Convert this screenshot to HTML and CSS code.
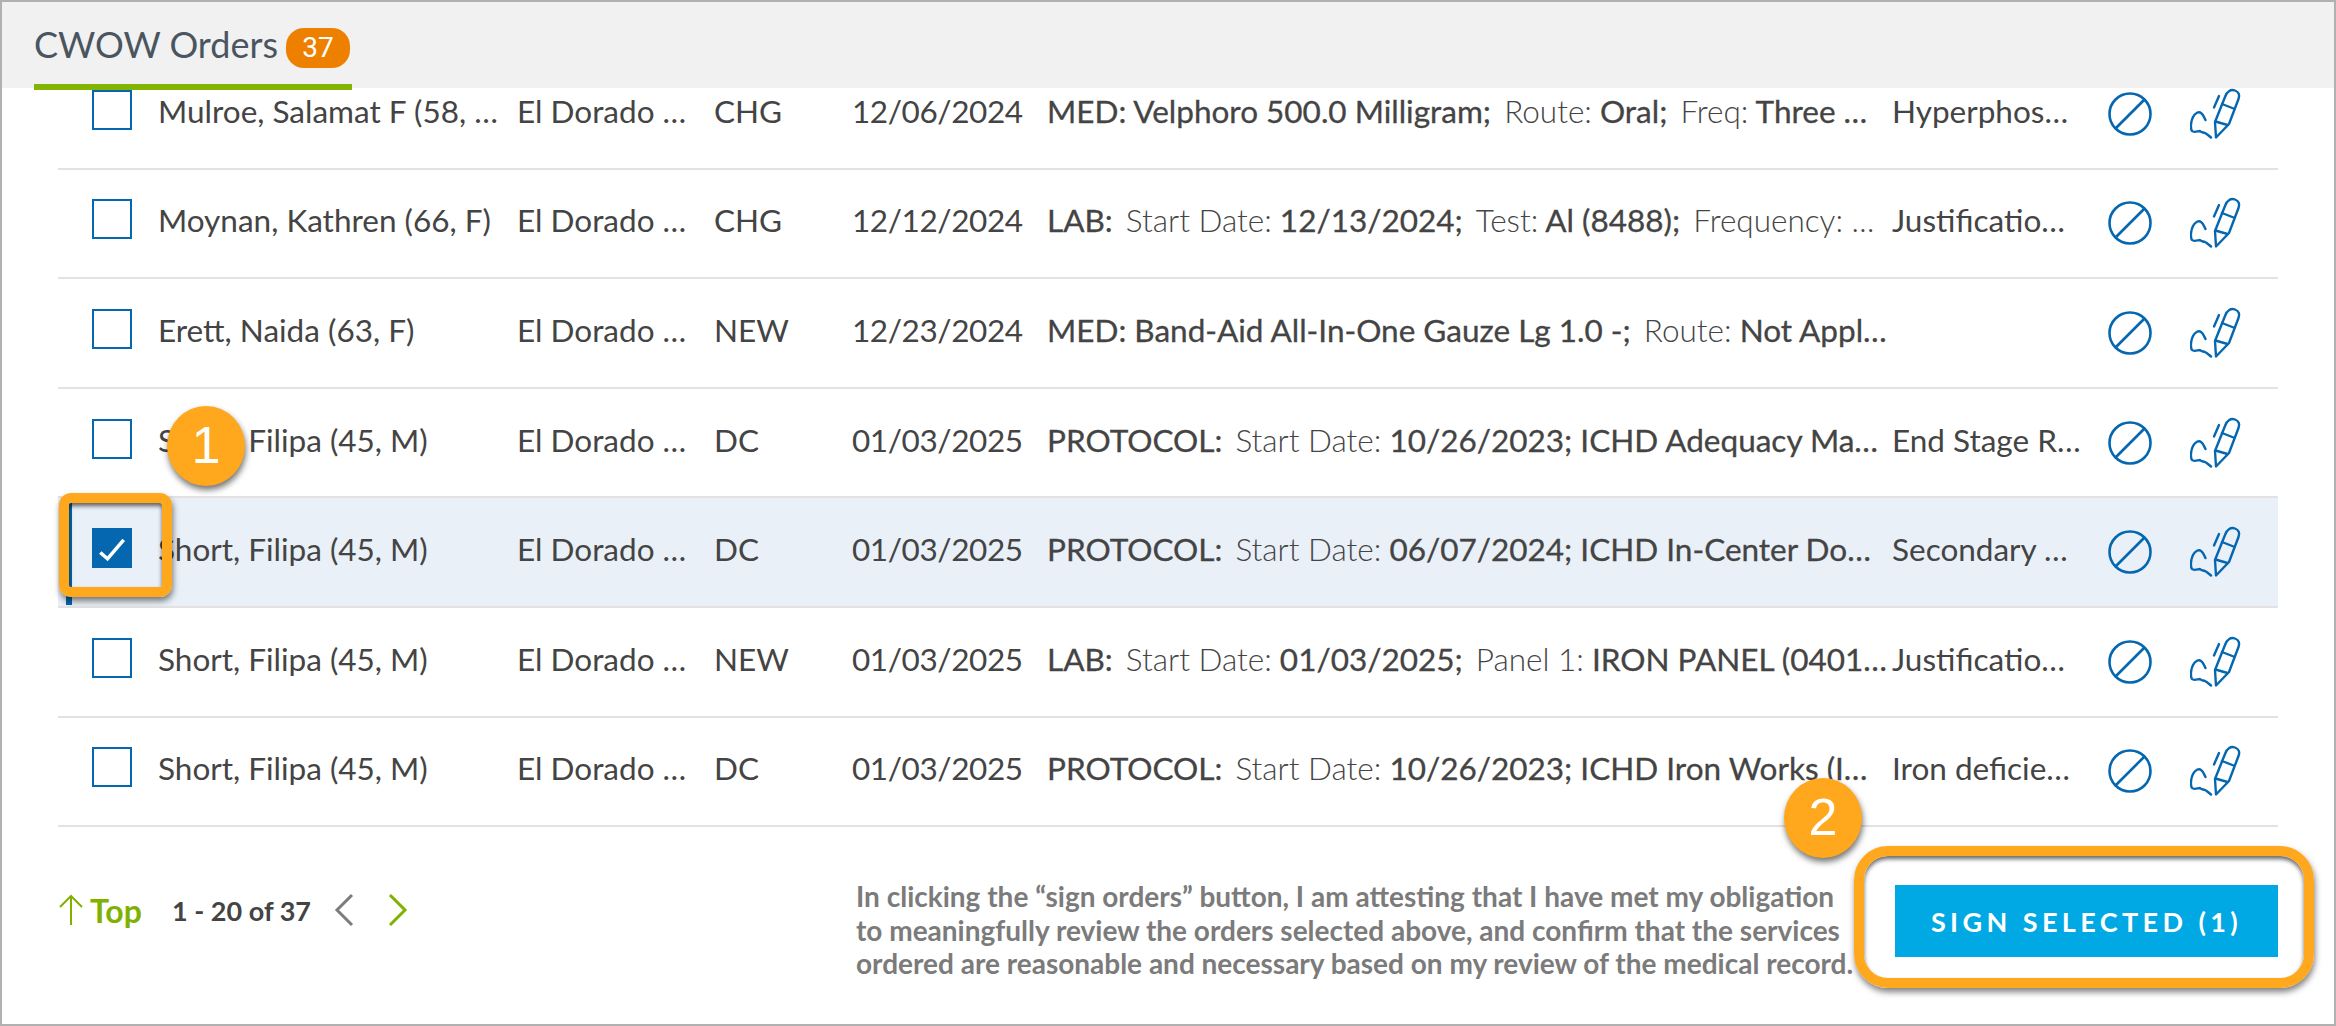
FILE: index.html
```html
<!DOCTYPE html>
<html lang="en">
<head>
<meta charset="utf-8">
<title>CWOW Orders</title>
<link rel="stylesheet" href="styles.css">
</head>
<body>
<svg class="defs" width="0" height="0" aria-hidden="true">
  <symbol id="i-block" viewBox="0 0 44 44"><circle cx="22" cy="22" r="20.5" fill="none" stroke="currentColor" stroke-width="2.6"/><path d="M7.5 36.5 36.5 7.5" fill="none" stroke="currentColor" stroke-width="2.6"/></symbol>
  <symbol id="i-sign" viewBox="0 0 52 52"><g fill="none" stroke="currentColor" stroke-width="2.4" stroke-linecap="round" stroke-linejoin="round"><path d="M26 49.500 25 34 35 9C37 3 41 1 45 2.500 49 4 50 7 48.500 11L39 36Z"/><path d="M32 16 43.500 20.500M25.500 33.500 37.500 37"/><path d="M24 19.500 29 8"/><path d="M21 49.500C18 47 17 46 15 45 13 44 12 45 10 43 8 43 4 45 2 43 0 40 1 33 3 29 5 25 9 23 11 25 14 27 14 30 15.500 32"/></g></symbol>
</svg>
<main class="panel">
  <header class="tabs">
    <div class="tab"><span class="tab-label">CWOW Orders</span><span class="badge">37</span></div>
  </header>
  <section class="list">
    <div class="rows">
      <div class="row"><span class="check"></span><span>Mulroe, Salamat F (58, …</span><span>El Dorado …</span><span>CHG</span><span class="date">12/06/2024</span><span class="detail"><b>MED: Velphoro 500.0 Milligram;</b> <i>Route:</i> <b>Oral;</b> <i>Freq:</i> <b>Three …</b></span><span>Hyperphos…</span><span class="icons"><svg class="ic-block"><use href="#i-block"/></svg><svg class="ic-sign"><use href="#i-sign"/></svg></span></div>
      <div class="row"><span class="check"></span><span>Moynan, Kathren (66, F)</span><span>El Dorado …</span><span>CHG</span><span class="date">12/12/2024</span><span class="detail"><b>LAB:</b> <i>Start Date:</i> <b>12/13/2024;</b> <i>Test:</i> <b>Al (8488);</b> <i>Frequency: …</i></span><span>Justificatio…</span><span class="icons"><svg class="ic-block"><use href="#i-block"/></svg><svg class="ic-sign"><use href="#i-sign"/></svg></span></div>
      <div class="row"><span class="check"></span><span>Erett, Naida (63, F)</span><span>El Dorado …</span><span>NEW</span><span class="date">12/23/2024</span><span class="detail"><b>MED: Band-Aid All-In-One Gauze Lg 1.0 -;</b> <i>Route:</i> <b>Not Appl…</b></span><span></span><span class="icons"><svg class="ic-block"><use href="#i-block"/></svg><svg class="ic-sign"><use href="#i-sign"/></svg></span></div>
      <div class="row"><span class="check"></span><span>Short, Filipa (45, M)</span><span>El Dorado …</span><span>DC</span><span class="date">01/03/2025</span><span class="detail"><b>PROTOCOL:</b> <i>Start Date:</i> <b>10/26/2023; ICHD Adequacy Ma…</b></span><span>End Stage R…</span><span class="icons"><svg class="ic-block"><use href="#i-block"/></svg><svg class="ic-sign"><use href="#i-sign"/></svg></span></div>
      <div class="row selected"><span class="check checked"><svg viewBox="0 0 40 40"><path d="M7 25 15 32 33 11" fill="none" stroke="#fff" stroke-width="4"/></svg></span><span>Short, Filipa (45, M)</span><span>El Dorado …</span><span>DC</span><span class="date">01/03/2025</span><span class="detail"><b>PROTOCOL:</b> <i>Start Date:</i> <b>06/07/2024; ICHD In-Center Do…</b></span><span>Secondary …</span><span class="icons"><svg class="ic-block"><use href="#i-block"/></svg><svg class="ic-sign"><use href="#i-sign"/></svg></span></div>
      <div class="row"><span class="check"></span><span>Short, Filipa (45, M)</span><span>El Dorado …</span><span>NEW</span><span class="date">01/03/2025</span><span class="detail"><b>LAB:</b> <i>Start Date:</i> <b>01/03/2025;</b> <i>Panel 1:</i> <b>IRON PANEL (0401…</b></span><span>Justificatio…</span><span class="icons"><svg class="ic-block"><use href="#i-block"/></svg><svg class="ic-sign"><use href="#i-sign"/></svg></span></div>
      <div class="row"><span class="check"></span><span>Short, Filipa (45, M)</span><span>El Dorado …</span><span>DC</span><span class="date">01/03/2025</span><span class="detail"><b>PROTOCOL:</b> <i>Start Date:</i> <b>10/26/2023; ICHD Iron Works (I…</b></span><span>Iron deficie…</span><span class="icons"><svg class="ic-block"><use href="#i-block"/></svg><svg class="ic-sign"><use href="#i-sign"/></svg></span></div>
    </div>
  </section>
  <footer class="foot">
    <div class="pager">
      <a class="top"><svg viewBox="0 0 26 32"><path d="M13 31V2M2 13 13 2 24 13" fill="none" stroke="currentColor" stroke-width="2"/></svg>Top</a>
      <span class="count">1 - 20 of 37</span>
      <svg class="chev prev" viewBox="0 0 20 34"><path d="M18 2 3 17 18 32" fill="none" stroke="currentColor" stroke-width="3"/></svg>
      <svg class="chev next" viewBox="0 0 20 34"><path d="M2 2 17 17 2 32" fill="none" stroke="currentColor" stroke-width="3"/></svg>
    </div>
    <p class="attest">In clicking the “sign orders” button, I am attesting that I have met my obligation<br>to meaningfully review the orders selected above, and confirm that the services<br>ordered are reasonable and necessary based on my review of the medical record.</p>
    <button class="sign">SIGN SELECTED (1)</button>
  </footer>
  <div class="dot dot-1">1</div>
  <div class="dot dot-2">2</div>
  <div class="callout callout-1"></div>
  <div class="callout callout-2"></div>
</main>
</body>
</html>
```
FILE: styles.css
```css
* { box-sizing: border-box; }
html, body { margin: 0; height: 100%; }
body { font-family: Lato, "Open Sans", sans-serif; color: #444; background: #fff; overflow: hidden; }
.defs { position: absolute; }
.panel { position: relative; width: 2336px; height: 1026px; border: 2px solid #b1b1b1; display: flex; flex-direction: column; background: #fff; }
.tabs { height: 86px; background: #f1f1f1; padding-left: 32px; flex: none; position: relative; z-index: 1; }
.tab { display: inline-flex; align-items: flex-start; gap: 8px; width: 318px; height: 88px; border-bottom: 6px solid #84b402; padding-top: 20px; white-space: nowrap; }
.tab-label { font-size: 36px; line-height: 44px; color: #4a5560; }
.badge { width: 64px; height: 40px; border-radius: 18px; margin-top: 6px; background: #ee8000; color: #fff; font: 28px/40px Roboto, sans-serif; text-align: center; }
.list { height: 740px; overflow: hidden; padding: 0 56px; flex: none; }
.rows { margin-top: -28px; }
.row { position: relative; height: 109.6px; display: grid; grid-template-columns: 100px 359px 197px 138px 195px 845px 216px 1fr; align-items: center; border-bottom: 2px solid #e2e2e2; font-size: 31.500px; line-height: 40px; white-space: nowrap; }
.row > span { overflow: hidden; padding-bottom: 6px; }
.row > .icons, .row > .check { padding-bottom: 0; }
.date { letter-spacing: -.4px; }
.check { width: 40px; height: 40px; margin-left: 34px; margin-top: -8px; border: 2px solid #0467b0; }
.checked { background: #0467b0; }
.checked svg { display: block; width: 36px; height: 36px; }
.selected { background: #e9f0f7; }
.selected::before { content: ""; position: absolute; left: 8px; top: 4px; bottom: 1px; width: 6px; background: #0467b0; }
.detail b { font-weight: 400; -webkit-text-stroke: .3px #444; }
.detail i { font-style: normal; font-weight: 300; color: #444; margin-left: 5px; }
.icons { display: flex; align-items: center; color: #0467b0; overflow: visible; }
.ic-block { width: 44px; height: 44px; margin-right: 38px; }
.ic-sign { width: 52px; height: 52px; }
.foot { flex: 1; position: relative; display: flex; padding: 0 56px 0 34px; }
.pager { width: 820px; display: flex; align-items: center; height: 60px; margin-top: 52px; font-weight: 700; }
.top { display: flex; align-items: center; gap: 6px; color: #7fb200; font-size: 32px; width: 114px; margin-left: 22px; }
.top svg { width: 26px; height: 32px; }
.count { font-size: 27px; color: #444; width: 162px; margin-left: 0; white-space: nowrap; }
.chev { width: 20px; height: 34px; }
.prev { color: #7c7c7c; margin-left: 0; margin-right: 34px; }
.next { color: #7fb200; }
.attest { width: 1010px; margin: 52px 0 0 0; font-size: 28px; line-height: 33.500px; font-weight: 700; color: #7b7b7b; white-space: nowrap; }
.sign { position: absolute; right: 56px; top: 57px; width: 383px; height: 72px; border: 0; background: #00a8e4; color: #fff; font: 700 27px Lato, sans-serif; letter-spacing: 4.400px; }
.dot { position: absolute; width: 78px; height: 80px; border-radius: 50%; background: #ffa81e; color: #fff; text-align: center; font: 52px/78px "Liberation Sans", sans-serif; box-shadow: 1px 4px 6px rgba(0,0,0,.55); }
.dot-1 { left: 165px; top: 404px; }
.dot-2 { left: 1782px; top: 776px; }
.callout { position: absolute; border: 10px solid #ffa81e; box-shadow: 1px 4px 6px rgba(0,0,0,.5), inset 0 3px 4px rgba(0,0,0,.6); }
.callout-1 { left: 57px; top: 491px; width: 113px; height: 104px; border-radius: 12px; }
.callout-2 { left: 1852px; top: 844px; width: 460px; height: 142px; border-radius: 34px; }
```
